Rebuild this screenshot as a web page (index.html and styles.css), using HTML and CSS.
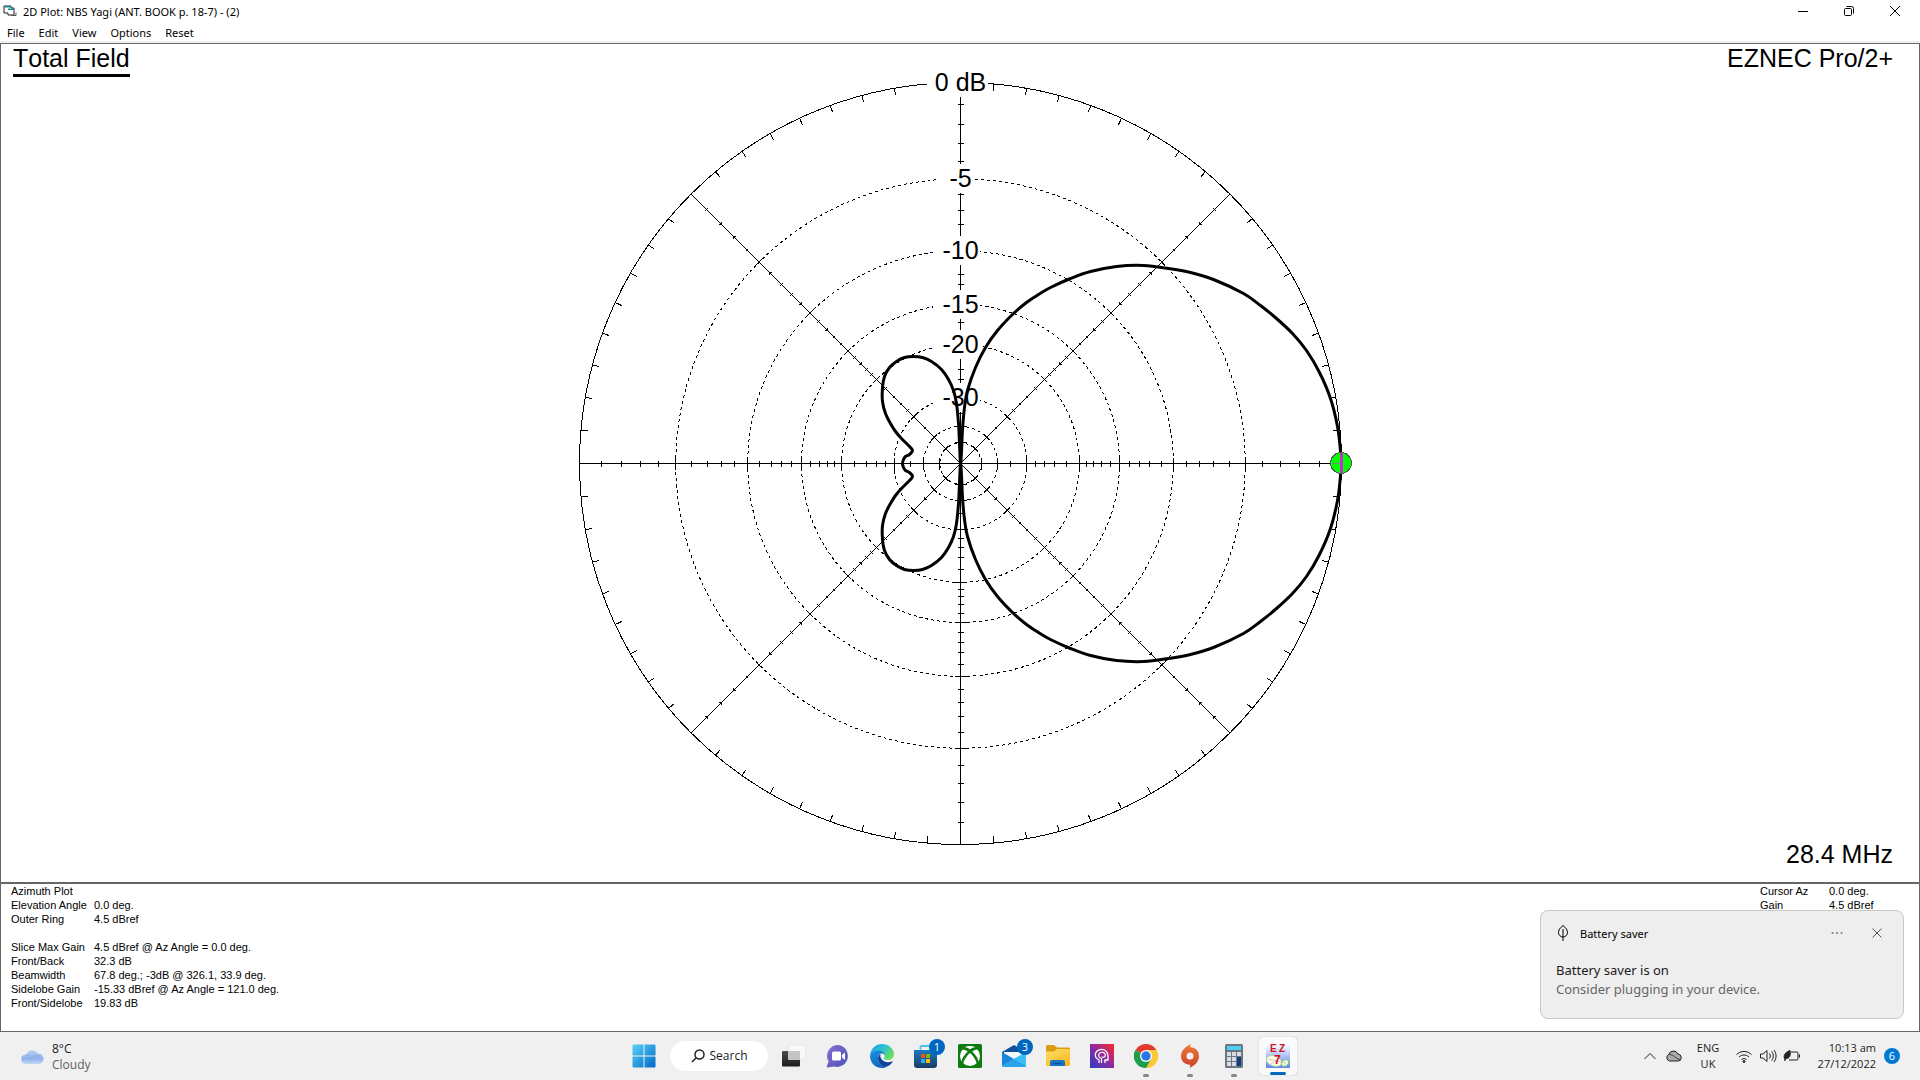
FILE: index.html
```html
<!DOCTYPE html>
<html lang="en">
<head>
  <meta charset="utf-8">
  <title>2D Plot: NBS Yagi</title>
  <link rel="stylesheet" href="styles.css">
</head>
<body>
  <header class="titlebar">
    <svg class="app-icon" width="14" height="14" viewBox="0 0 14 14">
      <path d="M1 2h7v2h3v7H5V9H1z" fill="#fff" stroke="#222"/>
      <path d="M1 2h7v1.500H1zM5 4.500h6v1.500H5z" fill="#1b8c90"/>
      <path d="M8 11.500h5v-3" stroke="#555" fill="none"/>
    </svg>
    <span class="title">2D Plot: NBS Yagi (ANT. BOOK p. 18-7) - (2)</span>
    <div class="window-buttons">
      <button aria-label="Minimise"><svg width="12" height="12" viewBox="0 0 12 12"><path d="M1 6.500h10"/></svg></button>
      <button aria-label="Restore"><svg width="12" height="12" viewBox="0 0 12 12"><rect x="1.500" y="3.500" width="7" height="7" rx="1"/><path d="M3.500 1.500h5a2 2 0 0 1 2 2v5"/></svg></button>
      <button aria-label="Close"><svg width="12" height="12" viewBox="0 0 12 12"><path d="M1 1l10 10M11 1L1 11"/></svg></button>
    </div>
  </header>

  <nav class="menubar">
    <button>File</button>
    <button>Edit</button>
    <button>View</button>
    <button>Options</button>
    <button>Reset</button>
  </nav>

  <main class="window">
    <section class="plot">
      <svg id="polar" class="polar" viewBox="-959.5 -419.5 1918 838">
        <g id="rings"></g>
        <g id="axes"></g>
        <g id="labels"></g>
        <path id="pattern" class="pattern"></path>
        <g class="cursor">
          <circle cx="380.500" cy="-.5" r="10.500"/>
          <path class="cursor-base" d="M371 0h10"/>
          <path class="cursor-bar" d="M381 -10.500v20"/>
        </g>
      </svg>
      <h1 class="field-name">Total Field</h1>
      <p class="product">EZNEC Pro/2+</p>
      <p class="frequency">28.4 MHz</p>
    </section>

    <section class="status">
      <table class="readout">
        <tr><th colspan="2">Azimuth Plot</th></tr>
        <tr><th>Elevation Angle</th><td>0.0 deg.</td></tr>
        <tr><th>Outer Ring</th><td>4.5 dBref</td></tr>
        <tr class="spacer"><td colspan="2"></td></tr>
        <tr><th>Slice Max Gain</th><td>4.5 dBref @ Az Angle = 0.0 deg.</td></tr>
        <tr><th>Front/Back</th><td>32.3 dB</td></tr>
        <tr><th>Beamwidth</th><td>67.8 deg.; -3dB @ 326.1, 33.9 deg.</td></tr>
        <tr><th>Sidelobe Gain</th><td>-15.33 dBref @ Az Angle = 121.0 deg.</td></tr>
        <tr><th>Front/Sidelobe</th><td>19.83 dB</td></tr>
      </table>
      <table class="readout cursor-readout">
        <tr><th>Cursor Az</th><td>0.0 deg.</td></tr>
        <tr><th>Gain</th><td>4.5 dBref</td></tr>
      </table>
    </section>
  </main>

  <aside class="toast">
    <div class="toast-head">
      <svg width="14" height="18" viewBox="0 0 14 18"><path d="M7 1.500C10 4 11.500 6 11.500 8.500A4.500 4.500 0 0 1 2.500 8.500C2.500 6 4 4 7 1.500zM7 5v12"/></svg>
      <span>Battery saver</span>
      <button class="more" aria-label="More"><svg width="12" height="4" viewBox="0 0 12 4"><circle cx="1.500" cy="2" r="1"/><circle cx="6" cy="2" r="1"/><circle cx="10.500" cy="2" r="1"/></svg></button>
      <button aria-label="Dismiss"><svg width="10" height="10" viewBox="0 0 10 10"><path d="M.5.5l9 9M9.500.5l-9 9"/></svg></button>
    </div>
    <p class="toast-title">Battery saver is on</p>
    <p class="toast-text">Consider plugging in your device.</p>
  </aside>

  <footer class="taskbar">
    <button class="weather">
      <svg width="24" height="24" viewBox="0 0 24 24">
        <defs><linearGradient id="cloud" x2="0" y2="1"><stop offset="0" stop-color="#b8d0f5"/><stop offset=".6" stop-color="#8fb2ea"/><stop offset="1" stop-color="#c3d8f8"/></linearGradient></defs>
        <path d="M5 19a5 5 0 0 1-.5-9.500h2a6 6 0 0 1 11-1A5.300 5.300 0 0 1 19 19z" fill="url(#cloud)"/>
        <path d="M5.500 10a6 6 0 0 1 6 4M12 13a6 5 0 0 1 8-2" stroke="#7ba2e2" stroke-width="1" fill="none" opacity=".6"/>
      </svg>
      <span>8°C<br><span class="muted">Cloudy</span></span>
    </button>

    <div class="apps">
      <button class="app" aria-label="Start">
        <svg width="24" height="24" viewBox="0 0 24 24">
          <defs><linearGradient id="win" gradientUnits="userSpaceOnUse" x1="0" y1="0" x2="24" y2="24"><stop offset="0" stop-color="#59d2fb"/><stop offset="1" stop-color="#0067c6"/></linearGradient></defs>
          <path d="M1.500.5H11.500V11.500H.5V1.500a1 1 0 0 1 1-1zM12.500.5h10a1 1 0 0 1 1 1v10h-11zM.5 12.500h11v11h-10a1 1 0 0 1-1-1zM12.500 12.500h11v10a1 1 0 0 1-1 1h-10z" fill="url(#win)"/>
        </svg>
      </button>
      <button class="search">
        <svg width="14" height="14" viewBox="0 0 14 14"><circle cx="8.500" cy="5.500" r="4.500"/><path d="M5.200 8.800L1 13"/></svg>
        Search
      </button>
      <button class="app" aria-label="Task view">
        <svg width="24" height="24" viewBox="0 0 24 24">
          <defs><linearGradient id="tv" x2="0" y2="1"><stop offset="0" stop-color="#4a4a4a"/><stop offset="1" stop-color="#1c1c1c"/></linearGradient></defs>
          <rect x="6.500" y="1" width="17" height="15" rx="1" fill="#f8f8f8" stroke="#dedede" stroke-width=".5"/>
          <rect x="0" y="7" width="18" height="15.500" rx="1" fill="url(#tv)"/>
          <path d="M6 7h12v9H7a1 1 0 0 1-1-1z" fill="#c4c4c4"/>
        </svg>
      </button>
      <button class="app" aria-label="Chat">
        <svg width="24" height="24" viewBox="0 0 24 24">
          <defs><linearGradient id="chat" x2="1" y2="1"><stop offset="0" stop-color="#8a6fd0"/><stop offset="1" stop-color="#4a52b8"/></linearGradient></defs>
          <path d="M12.500 1A11 11 0 1 1 8 22.500L1.500 23.500 .7 22.600 2.600 17.500A11 11 0 0 1 12.500 1z" fill="url(#chat)"/>
          <rect x="6" y="7.500" width="9" height="9" rx="1.500" fill="#fff"/>
          <path d="M16 11l3-2.500v7.500L16 13.500z" fill="#fff"/>
        </svg>
      </button>
      <button class="app" aria-label="Edge">
        <svg width="24" height="24" viewBox="0 0 24 24">
          <defs>
            <linearGradient id="edge1" x2="1" y2=".6"><stop offset="0" stop-color="#1e9be8"/><stop offset=".5" stop-color="#2bc0d8"/><stop offset="1" stop-color="#6be05a"/></linearGradient>
            <linearGradient id="edge2" x2=".4" y2="1"><stop offset="0" stop-color="#1d8fe0"/><stop offset="1" stop-color="#1268c4"/></linearGradient>
          </defs>
          <path d="M0 11.500C.5 4.500 6 0 12 0c7 0 12 5 12 10 0 4-3 6-6.500 6-3 0-4-1-3.500-2 1.500-2 .5-6-4-6-5 0-9 1.500-10 3.500z" fill="url(#edge1)"/>
          <path d="M0 12C1 8.500 5 6.500 9 6.500c3 0 5.500 1.500 6 4.500C12 8 8 10 8 14.500c0 4 3.500 8 8.500 8.500-2 1-3 1-4.500 1C5 24 0 18.500 0 12z" fill="url(#edge2)"/>
          <path d="M10.500 10C9 11 8 12.500 8 14.500c0 4 3.500 8 7.500 8.500 3-.5 5.500-2.500 7-5 .3-.6-.2-.8-.7-.6-6 2.600-12.800-1.600-11.300-7.400z" fill="#11459c"/>
        </svg>
      </button>
      <button class="app" aria-label="Store">
        <svg width="24" height="24" viewBox="0 0 24 24">
          <defs><linearGradient id="store" x2="0" y2="1"><stop offset="0" stop-color="#1b78c2"/><stop offset="1" stop-color="#173c66"/></linearGradient></defs>
          <path d="M6.500 6V3a1 1 0 0 1 1-1h8a1 1 0 0 1 1 1v3" stroke="#56c0ef" stroke-width="1.800" fill="none"/>
          <path d="M0 6h23v15a3 3 0 0 1-3 3H3a3 3 0 0 1-3-3z" fill="url(#store)"/>
          <path d="M7 10h4v4H7z" fill="#f25022"/><path d="M12 10h4v4h-4z" fill="#7fba00"/><path d="M7 15h4v4H7z" fill="#27a8f0"/><path d="M12 15h4v4h-4z" fill="#ffb900"/>
        </svg>
        <span class="badge">1</span>
      </button>
      <button class="app" aria-label="Xbox">
        <svg width="24" height="24" viewBox="0 0 24 24">
          <rect width="24" height="24" rx="1.500" fill="#107c10"/>
          <circle cx="12" cy="12" r="10" fill="#fff"/>
          <path d="M5 3.500C7.500 2.700 10 4 12 5.200 14 4 16.500 2.700 19 3.500L20 5.500C17.800 5 15.800 6.300 14.300 7.500 17.500 10.500 20.500 15 20.700 18.500L18.800 20.500C18.500 16.500 15 11.500 12 9 9 11.500 5.500 16.500 5.200 20.500L3.300 18.500C3.500 15 6.500 10.500 9.700 7.500 8.200 6.300 6.200 5 4 5.500z" fill="#107c10"/>
          <path d="M7.500 3C9 2.700 10.800 3.300 12 4c1.200-.7 3-1.300 4.500-1C15 2.300 13.500 2 12 2s-3 .3-4.500 1z" fill="#fff"/>
        </svg>
      </button>
      <button class="app" aria-label="Mail">
        <svg width="24" height="24" viewBox="0 0 24 24">
          <path d="M0 8L12 1l12 7v3H0z" fill="#10519a"/>
          <path d="M2 8h20v6l-10 4L2 12z" fill="#f3f8fc"/>
          <path d="M24 8v13.500a1.500 1.500 0 0 1-1.500 1.500h-21A1.500 1.500 0 0 1 0 21.500z" fill="#3cbdf3"/>
          <path d="M0 8l12 7-12 7z" fill="#1a86d8"/>
          <path d="M12 15l12 7-1.500 1h-21L0 21.500z" fill="#2aa4e8"/>
        </svg>
        <span class="badge">3</span>
      </button>
      <button class="app" aria-label="File Explorer">
        <svg width="24" height="24" viewBox="0 0 24 24">
          <defs><linearGradient id="folder" x2=".6" y2="1"><stop offset="0" stop-color="#ffdf70"/><stop offset="1" stop-color="#f8b91c"/></linearGradient></defs>
          <path d="M0 2.500A1.500 1.500 0 0 1 1.500 1H8l3 2.500h11.500A1.500 1.500 0 0 1 24 5v6H0z" fill="#dc9c12"/>
          <path d="M0 7.500h8L11 5h12a1 1 0 0 1 1 1v14.500a1.500 1.500 0 0 1-1.500 1.500h-21A1.500 1.500 0 0 1 0 20.500z" fill="url(#folder)"/>
          <path d="M4 22v-4a2 2 0 0 1 2-2h11a2 2 0 0 1 2 2v4z" fill="#1673c6"/><path d="M7 19h9v1.200H7z" fill="#0c4f96"/>
        </svg>
      </button>
      <button class="app" aria-label="Headspace">
        <svg width="24" height="24" viewBox="0 0 24 24">
          <defs><linearGradient id="head" y1="1" x2="1" y2="0"><stop offset="0" stop-color="#2a3cc8"/><stop offset=".5" stop-color="#8c2ba0"/><stop offset="1" stop-color="#ff2828"/></linearGradient></defs>
          <rect width="24" height="24" fill="url(#head)"/>
          <path d="M9 19v-3C6 14.500 4.800 12 5.500 9.500 6.500 6 11 4.500 14.500 6c3.500 1.500 4 4.500 3.500 10h-3v3" fill="none" stroke="#fff" stroke-width="1.300"/>
          <path d="M11.500 19v-4.500C8.500 13.500 7.800 11 9.500 9.200c2-1.700 5.500-1 5.800 1.600.2 2.600-2.600 3.400-3.300 1.700" fill="none" stroke="#fff" stroke-width="1.200"/>
        </svg>
      </button>
      <button class="app running" aria-label="Chrome">
        <svg width="24" height="24" viewBox="0 0 24 24">
          <path d="M12 12L1.600 6A12 12 0 0 1 22.400 6z" fill="#e33b2e"/>
          <path d="M12 12L22.400 6A12 12 0 0 1 12 24z" fill="#fcc934"/>
          <path d="M12 12v12A12 12 0 0 1 1.600 6z" fill="#1e9e4a"/>
          <path d="M12 6h10.400A12 12 0 0 1 12 24l5.200-9z" fill="#fcc934"/>
          <path d="M17.200 15L12 24A12 12 0 0 1 1.600 6l5.200 9z" fill="#1e9e4a"/>
          <circle cx="12" cy="12" r="6" fill="#fff"/><circle cx="12" cy="12" r="4.700" fill="#2a75e8"/>
        </svg>
      </button>
      <button class="app running" aria-label="Origin">
        <svg width="24" height="24" viewBox="0 0 24 24">
          <defs><linearGradient id="origin" x2="0" y2="1"><stop offset="0" stop-color="#ee7a35"/><stop offset="1" stop-color="#c8412a"/></linearGradient></defs>
          <path d="M13 0c-.8 1.300-1 2.300-.7 3.200C18 3.500 21 7.500 21 12c0 5.500-4 9.500-9.500 12 .8-1.300.9-2.300.6-3.200C6 20.500 3 16.500 3 12c0-5.500 4.500-9.500 10-12zM12 8.500a3.500 3.500 0 1 0 0 7 3.500 3.500 0 0 0 0-7z" fill="url(#origin)" fill-rule="evenodd"/>
        </svg>
      </button>
      <button class="app running" aria-label="Calculator">
        <svg width="24" height="24" viewBox="0 0 24 24">
          <rect x="3" width="18" height="24" rx="1.500" fill="#6d7680"/>
          <rect x="5" y="2" width="14" height="4" fill="#4cd0f5"/>
          <path d="M5 8h4v4H5zM10 8h4v4h-4zM15 8h4v4h-4zM5 13h4v4H5zM10 13h4v4h-4zM5 18h4v4H5zM10 18h4v4h-4z" fill="#d8dde2"/>
          <path d="M15 13h4v9h-4z" fill="#0f3c7a"/>
        </svg>
      </button>
      <button class="app running active" aria-label="EZNEC">
        <svg width="24" height="24" viewBox="0 0 24 24">
          <defs><linearGradient id="ez" x2="0" y2="1"><stop offset="0" stop-color="#fff"/><stop offset="1" stop-color="#6484f0"/></linearGradient></defs>
          <rect width="24" height="24" fill="url(#ez)"/>
          <ellipse cx="8" cy="17" rx="8" ry="5" fill="#fbffe8" stroke="#9bd67c" stroke-width=".7" transform="rotate(20 8 17)"/>
          <ellipse cx="19" cy="19" rx="4" ry="3" fill="#e8ffd8" stroke="#6fc050" stroke-width=".7" transform="rotate(-35 19 19)"/>
          <path d="M2 15l18 4M5 20l9-6" stroke="#d9a0c0" stroke-width=".7"/>
          <text x="4" y="8" class="ez-text">E</text><text x="13" y="8" class="ez-text">Z</text><text x="8" y="20" class="ez-text ez-seven">7</text>
        </svg>
      </button>
    </div>

    <div class="tray">
      <button class="tray-icon" aria-label="Hidden icons"><svg width="14" height="10" viewBox="0 0 14 10"><path d="M1.500 8L7 2.500 12.500 8"/></svg></button>
      <button class="tray-icon" aria-label="OneDrive"><svg width="18" height="16" viewBox="0 0 18 16"><path d="M4.500 13a3.500 3.500 0 0 1-.8-6.500A5 5 0 0 1 13 6a3.600 3.600 0 0 1 .8 7z" fill="#aaa"/><path d="M3.700 6.500c3 0 5 1 7.500 3.500l4.500 2" stroke-width=".8"/></svg></button>
      <button class="language">ENG<br>UK</button>
      <button class="system" aria-label="Network, sound and battery">
        <svg width="18" height="16" viewBox="0 0 18 16"><path d="M1.500 6.500a10.500 10.500 0 0 1 15 0M4 9a7 7 0 0 1 10 0M6.500 11.500a3.600 3.600 0 0 1 5 0"/><circle cx="9" cy="13.500" r="1" fill="#222"/></svg>
        <svg width="18" height="16" viewBox="0 0 18 16"><path d="M1.500 6v4h2.500l4 3.500v-11L4 6zM10.500 5.500a4 4 0 0 1 0 5M12.700 3.500a7 7 0 0 1 0 9M15 2a9.500 9.500 0 0 1 0 12"/></svg>
        <svg width="18" height="16" viewBox="0 0 18 16"><path d="M8 4h6a1 1 0 0 1 1 1v6a1 1 0 0 1-1 1H6M16.500 6.500v3"/><path d="M1 9.500C1 6 3 4 7 2.500 8 7.500 6.500 10.500 3 10.500l-1.500 2.500" fill="#222"/></svg>
      </button>
      <button class="clock">10:13 am<br>27/12/2022</button>
      <span class="count">6</span>
    </div>
  </footer>

  <script src="plot.js"></script>
</body>
</html>
```
FILE: styles.css
```css
* {
  box-sizing: border-box;
}

body {
  margin: 0;
  min-height: 100vh;
  display: flex;
  flex-direction: column;
  background-color: #fff;
  color: #000;
  font-family: "Noto Sans", "Open Sans", sans-serif;
  font-size: 11px;
}

h1,
p {
  margin: 0;
  font-weight: normal;
}

button {
  display: flex;
  align-items: center;
  justify-content: center;
  padding: 0;
  border: none;
  background: none;
  color: inherit;
  font: inherit;
}

svg {
  fill: none;
}

/* Title bar and menu */

.titlebar {
  display: flex;
  align-items: center;
  height: 22px;
  padding-left: 3px;
}

.title {
  padding-left: 6px;
}

.window-buttons {
  display: flex;
  align-self: stretch;
  margin-left: auto;
  padding-right: 2px;
}

.window-buttons button {
  width: 46px;
  stroke: #000;
}

.menubar {
  display: flex;
  height: 21px;
  padding-top: 2px;
  border-bottom: 2px solid #f0f0f0;
}

.menubar button {
  padding: 0 7px;
}

/* Plot window */

.window {
  flex: 1;
  display: flex;
  flex-direction: column;
  border: 1px solid #666;
  font-family: "Liberation Sans", Arial, sans-serif;
}

.plot {
  flex: 1;
  display: grid;
  grid-template-columns: 1fr 1fr;
  grid-template-rows: 1fr 1fr;
  font-size: 25px;
  line-height: 28px;
  font-kerning: none;
}

.polar {
  grid-area: 1 / 1 / 3 / 3;
  width: 100%;
  height: 100%;
  stroke: #000;
  shape-rendering: crispEdges;
}

.ring {
  stroke-dasharray: 3 3;
}

.label-back {
  fill: #fff;
  stroke: none;
}

.label {
  fill: #000;
  stroke: none;
  text-anchor: middle;
}

.pattern {
  stroke-width: 3;
  stroke-linejoin: round;
  shape-rendering: auto;
}

.cursor circle {
  fill: #0f0;
  stroke: #555;
}

.cursor-base {
  stroke: #808080;
}

.cursor-bar {
  stroke: #c030d0;
  stroke-width: 3;
}

.field-name {
  grid-area: 1 / 1;
  place-self: start;
  margin-left: 12px;
  padding-bottom: 2px;
  border-bottom: 3px solid #000;
  font-size: 25px;
}

.product {
  grid-area: 1 / 2;
  place-self: start end;
  margin-right: 26px;
}

.frequency {
  grid-area: 2 / 2;
  place-self: end;
  margin: 0 26px 14px 0;
}

.status {
  display: flex;
  justify-content: space-between;
  align-items: flex-start;
  height: 149px;
  padding: 0 10px;
  border-top: 2px solid #666;
}

.readout {
  border-collapse: collapse;
  font-size: 11px;
  line-height: 14px;
}

.readout th,
.readout td {
  height: 14px;
  padding: 0;
  text-align: left;
  font-weight: normal;
}

.readout th {
  width: 83px;
}

.cursor-readout {
  width: 149px;
}

.cursor-readout th {
  width: 69px;
}

/* Notification */

.toast {
  position: absolute;
  right: 16px;
  bottom: 61px;
  width: 364px;
  height: 109px;
  padding: 10px 14px 10px 15px;
  border: 1px solid #c8c8c8;
  border-radius: 8px;
  background-color: #eee;
  font-size: 13px;
  line-height: 19px;
}

.toast-head {
  display: flex;
  align-items: center;
  height: 24px;
  margin-bottom: 16px;
  font-size: 11px;
  stroke: #000;
}

.toast-head span {
  margin: 0 auto 0 10px;
}

.toast-head button {
  width: 24px;
  height: 24px;
  stroke: #555;
}

.toast-head .more {
  margin-right: 16px;
  stroke: none;
}

.more svg {
  fill: #777;
}

.toast-title {
  color: #1b1b1b;
}

.toast-text {
  color: #666;
}

/* Taskbar */

.taskbar {
  display: grid;
  grid-template-columns: 1fr auto 1fr;
  height: 48px;
  background-color: #f0f0f0;
  color: #1b1b1b;
  font-family: "Open Sans", "Noto Sans", sans-serif;
  line-height: 16px;
}

.weather {
  justify-self: start;
  gap: 8px;
  margin-left: 20px;
  padding-top: 2px;
  font-size: 12px;
  text-align: left;
}

.muted {
  color: #606060;
}

.apps {
  display: flex;
  align-items: center;
}

.app {
  position: relative;
  width: 44px;
  height: 48px;
}

.search {
  gap: 5px;
  width: 98px;
  height: 30px;
  margin: 0 4px;
  border-radius: 15px;
  background-color: #fff;
  font-size: 12px;
}

.search svg {
  stroke: #222;
  stroke-width: 1.5;
}

.badge {
  position: absolute;
  top: 7px;
  right: 3px;
  width: 16px;
  height: 16px;
  border-radius: 8px;
  background-color: #0067c0;
  color: #fff;
  font-size: 11px;
}

.running::after {
  content: "";
  position: absolute;
  bottom: 3px;
  left: 19px;
  width: 6px;
  height: 3px;
  border-radius: 2px;
  background-color: #868686;
}

.active {
  height: 38px;
  margin: 0 1px 0 3px;
  width: 38px;
  border-radius: 4px;
  background-color: #fafafa;
  box-shadow: 0 0 1px #999;
}

.active::after {
  bottom: 0;
  left: 11px;
  width: 16px;
  background-color: #0067c0;
}

.ez-text {
  fill: #d01020;
  font-family: "Liberation Sans", Arial, sans-serif;
  font-size: 10px;
  font-weight: bold;
}

.ez-seven {
  font-size: 12px;
}

.tray {
  display: flex;
  align-items: center;
  justify-self: end;
  padding-right: 20px;
  stroke: #222;
}

.tray-icon {
  width: 24px;
  height: 40px;
}

.language {
  width: 44px;
}

.system {
  gap: 6px;
  width: 76px;
}

.clock {
  width: 70px;
  justify-content: flex-end;
  text-align: right;
}

.count {
  width: 16px;
  height: 16px;
  margin-left: 8px;
  border-radius: 8px;
  background-color: #0078d4;
  color: #fff;
  font-size: 11px;
  text-align: center;
}
```
FILE: plot.js
```javascript
const SVG_NS = 'http://www.w3.org/2000/svg';
const R = 381;

const rings = document.getElementById('rings');
const axes = document.getElementById('axes');
const labels = document.getElementById('labels');

// ARRL log scale: the radius shrinks by 0.89 for every 2 dB
function radius(db) {
  return R * Math.pow(0.89, -db / 2);
}

function add(parent, name, attrs) {
  const el = document.createElementNS(SVG_NS, name);
  for (const key in attrs) {
    el.setAttribute(key, attrs[key]);
  }
  parent.appendChild(el);
  return el;
}

// Rings
add(rings, 'circle', { r: R });
[-5, -10, -15, -20, -30, -40, -50].forEach(function(db) {
  add(rings, 'circle', { r: radius(db), class: 'ring' });
});

// Ticks round the outer ring
for (let az = 0; az < 360; az += 5) {
  if (az % 45 !== 0) {
    const a = az * Math.PI / 180;
    const inner = R - 7;
    add(rings, 'line', {
      x1: R * Math.cos(a), y1: R * Math.sin(a),
      x2: inner * Math.cos(a), y2: inner * Math.sin(a)
    });
  }
}

// Axes with dB ticks
const major = [-5, -10, -15, -20, -30, -40, -50];
const minor = [-1, -2, -3, -4, -6, -7, -8, -9, -11, -12, -13, -14,
               -16, -17, -18, -19, -22, -24, -26, -28, -35];

for (let az = 0; az < 360; az += 45) {
  const a = az * Math.PI / 180;
  const c = Math.cos(a);
  const s = Math.sin(a);
  const straight = az % 90 === 0;
  add(axes, 'line', { x1: 0, y1: 0, x2: R * c, y2: R * s });

  function tick(db, half) {
    const r = Math.round(radius(db));
    add(axes, 'line', {
      x1: r * c - half * s, y1: r * s + half * c,
      x2: r * c + half * s, y2: r * s - half * c
    });
  }
  major.forEach(db => tick(db, straight ? 6 : 4));
  minor.forEach(db => tick(db, straight ? 3 : 2));
}

// Ring labels
[
  { db: 0, text: '0 dB', left: -34, right: 27 },
  { db: -5, text: '-5', left: -22, right: 11 },
  { db: -10, text: '-10', left: -28, right: 19 },
  { db: -15, text: '-15', left: -28, right: 19 },
  { db: -20, text: '-20', left: -28, right: 19 },
  { db: -30, text: '-30', left: -28, right: 19 }
].forEach(function(item) {
  const y = -Math.round(radius(item.db));
  add(labels, 'rect', {
    class: 'label-back', x: item.left, y: y - 15,
    width: item.right - item.left, height: 29
  });
  add(labels, 'text', { class: 'label', x: 0, y: y + 8 }).textContent = item.text;
});

// Field pattern, upper half; the lower half is its mirror
const upper = [
  [380, 0], [380, -12], [377, -37], [370, -65], [359, -91], [346, -113],
  [332, -130], [316, -145], [300, -158], [283, -170], [253, -184], [230, -191],
  [208, -195], [183, -198], [156, -197], [130, -192], [110, -185], [90, -176],
  [78, -169], [66, -161], [53, -150], [37, -133], [25, -116], [15, -96],
  [7, -73], [4, -56], [2, -34], [1, -12], [0, 0], [-1, -20], [-2, -40],
  [-4, -60], [-7, -73], [-12, -84], [-19, -94], [-29, -102], [-38, -106],
  [-47, -107], [-56, -106], [-64, -102], [-71, -96], [-76, -87], [-78, -76],
  [-78, -62], [-75, -50], [-70, -40], [-65, -32], [-59, -25], [-51, -17],
  [-48, -13], [-51, -9], [-55, -7], [-57, -4], [-58, 0]
];
const lower = upper.slice(0, -1).map(p => [p[0], -p[1]]).reverse();
const points = upper.concat(lower);

// Smooth curve through the points
let d = 'M' + points[0];
for (let i = 0; i < points.length - 1; i++) {
  const p0 = points[i - 1] || points[i];
  const p1 = points[i];
  const p2 = points[i + 1];
  const p3 = points[i + 2] || p2;
  d += 'C' + [
    p1[0] + (p2[0] - p0[0]) / 6, p1[1] + (p2[1] - p0[1]) / 6,
    p2[0] - (p3[0] - p1[0]) / 6, p2[1] - (p3[1] - p1[1]) / 6,
    p2[0], p2[1]
  ];
}
document.getElementById('pattern').setAttribute('d', d);
```
